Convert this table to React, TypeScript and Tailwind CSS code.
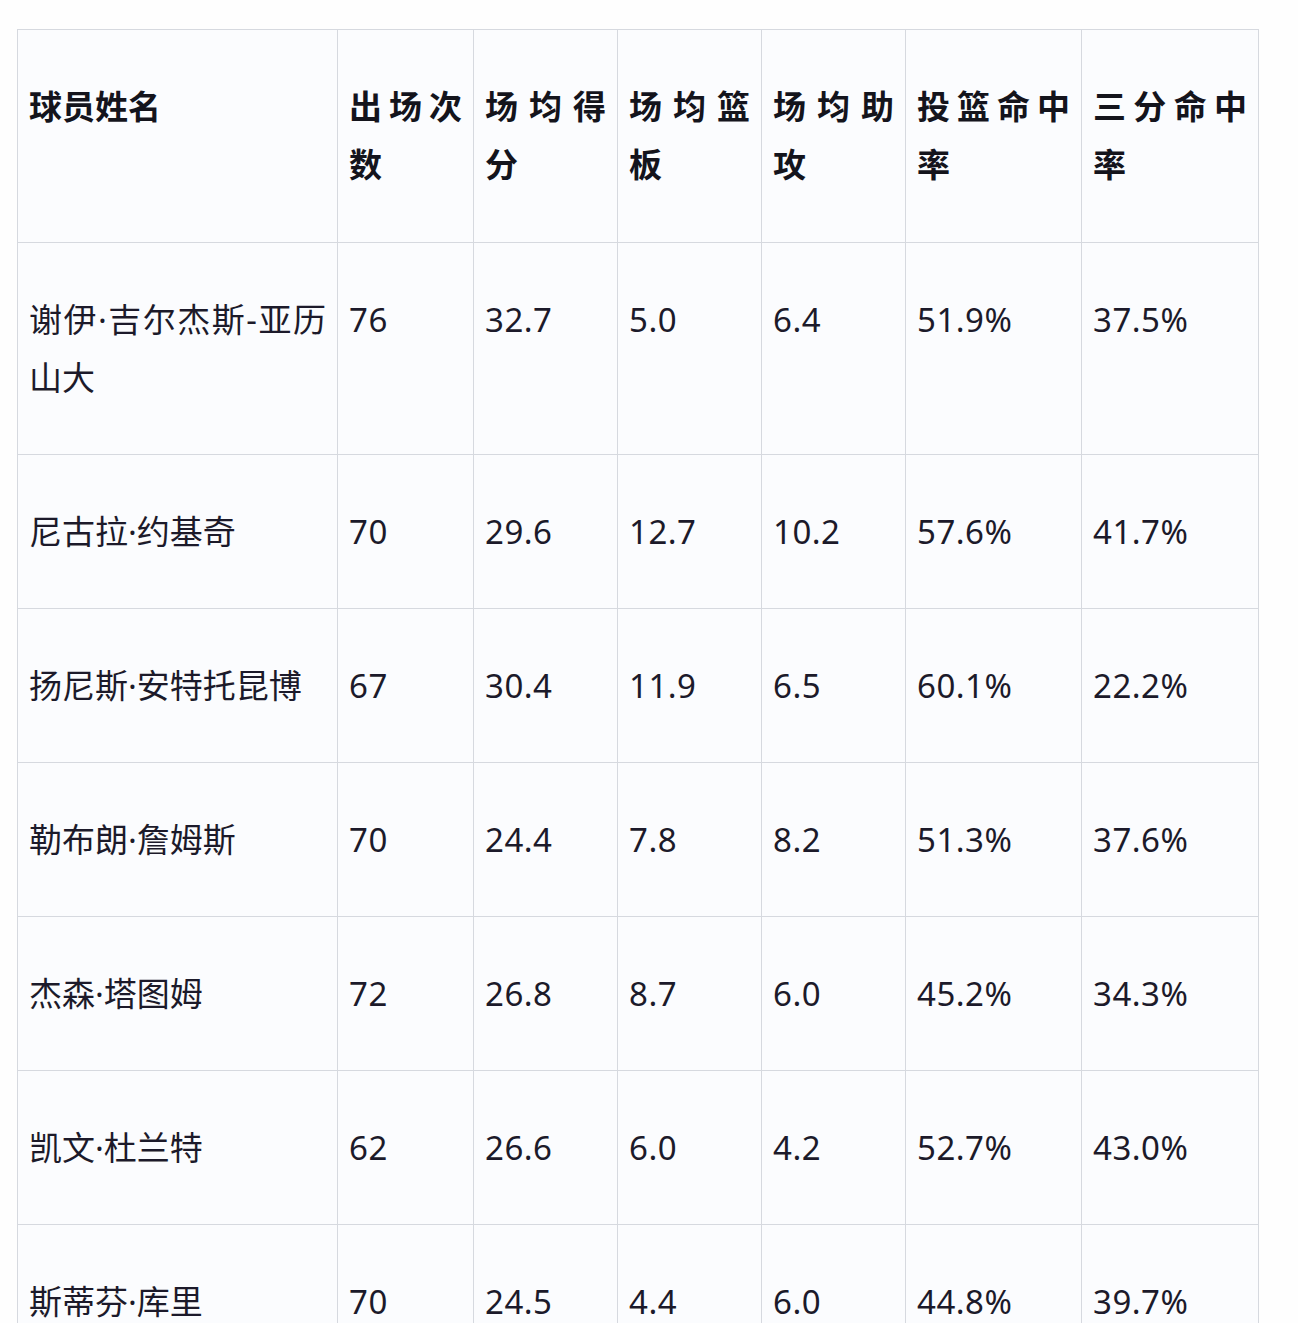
const headers = ["球员姓名", "出场次数", "场均得分", "场均篮板", "场均助攻", "投篮命中率", "三分命中率"];

const colWidths = ["w-[320px]", "w-[136px]", "w-[144px]", "w-[144px]", "w-[144px]", "w-[176px]", "w-[177px]"];

const rows = [
  ["谢伊·吉尔杰斯-亚历山大", "76", "32.7", "5.0", "6.4", "51.9%", "37.5%"],
  ["尼古拉·约基奇", "70", "29.6", "12.7", "10.2", "57.6%", "41.7%"],
  ["扬尼斯·安特托昆博", "67", "30.4", "11.9", "6.5", "60.1%", "22.2%"],
  ["勒布朗·詹姆斯", "70", "24.4", "7.8", "8.2", "51.3%", "37.6%"],
  ["杰森·塔图姆", "72", "26.8", "8.7", "6.0", "45.2%", "34.3%"],
  ["凯文·杜兰特", "62", "26.6", "6.0", "4.2", "52.7%", "43.0%"],
  ["斯蒂芬·库里", "70", "24.5", "4.4", "6.0", "44.8%", "39.7%"],
];

export default function App() {
  return (
    <div
      className="min-h-screen bg-[#fefefe] pl-[17px] pt-[29px]"
      style={{ fontFamily: '"Noto Sans", "Noto Sans CJK SC", sans-serif' }}
    >
      <table className="table-fixed border-collapse w-[1242px] bg-[#fbfcfe] text-[33px] leading-[58px]">
        <colgroup>
          {colWidths.map((w, i) => (
            <col key={i} className={w} />
          ))}
        </colgroup>
        <thead>
          <tr>
            {headers.map((h) => (
              <th
                key={h}
                className="border border-[#d6d9df] px-[11px] pt-[46px] pb-[50px] text-justify align-top font-bold text-[#14141c]"
                style={{ fontFamily: '"Noto Sans CJK SC", sans-serif' }}
              >
                {h}
              </th>
            ))}
          </tr>
        </thead>
        <tbody>
          {rows.map((r) => (
            <tr key={r[0]}>
              {r.map((c, i) => (
                <td
                  key={i}
                  className={
                    i === 0
                      ? "border border-[#d6d9df] px-[11px] pt-[48px] pb-[47px] text-justify align-top font-normal text-[#1c1a2a]"
                      : "border border-[#d6d9df] px-[11px] pt-[48px] pb-[47px] text-left align-top font-normal tracking-[0.5px] text-[#1c1a2a]"
                  }
                >
                  {c}
                </td>
              ))}
            </tr>
          ))}
        </tbody>
      </table>
    </div>
  );
}
